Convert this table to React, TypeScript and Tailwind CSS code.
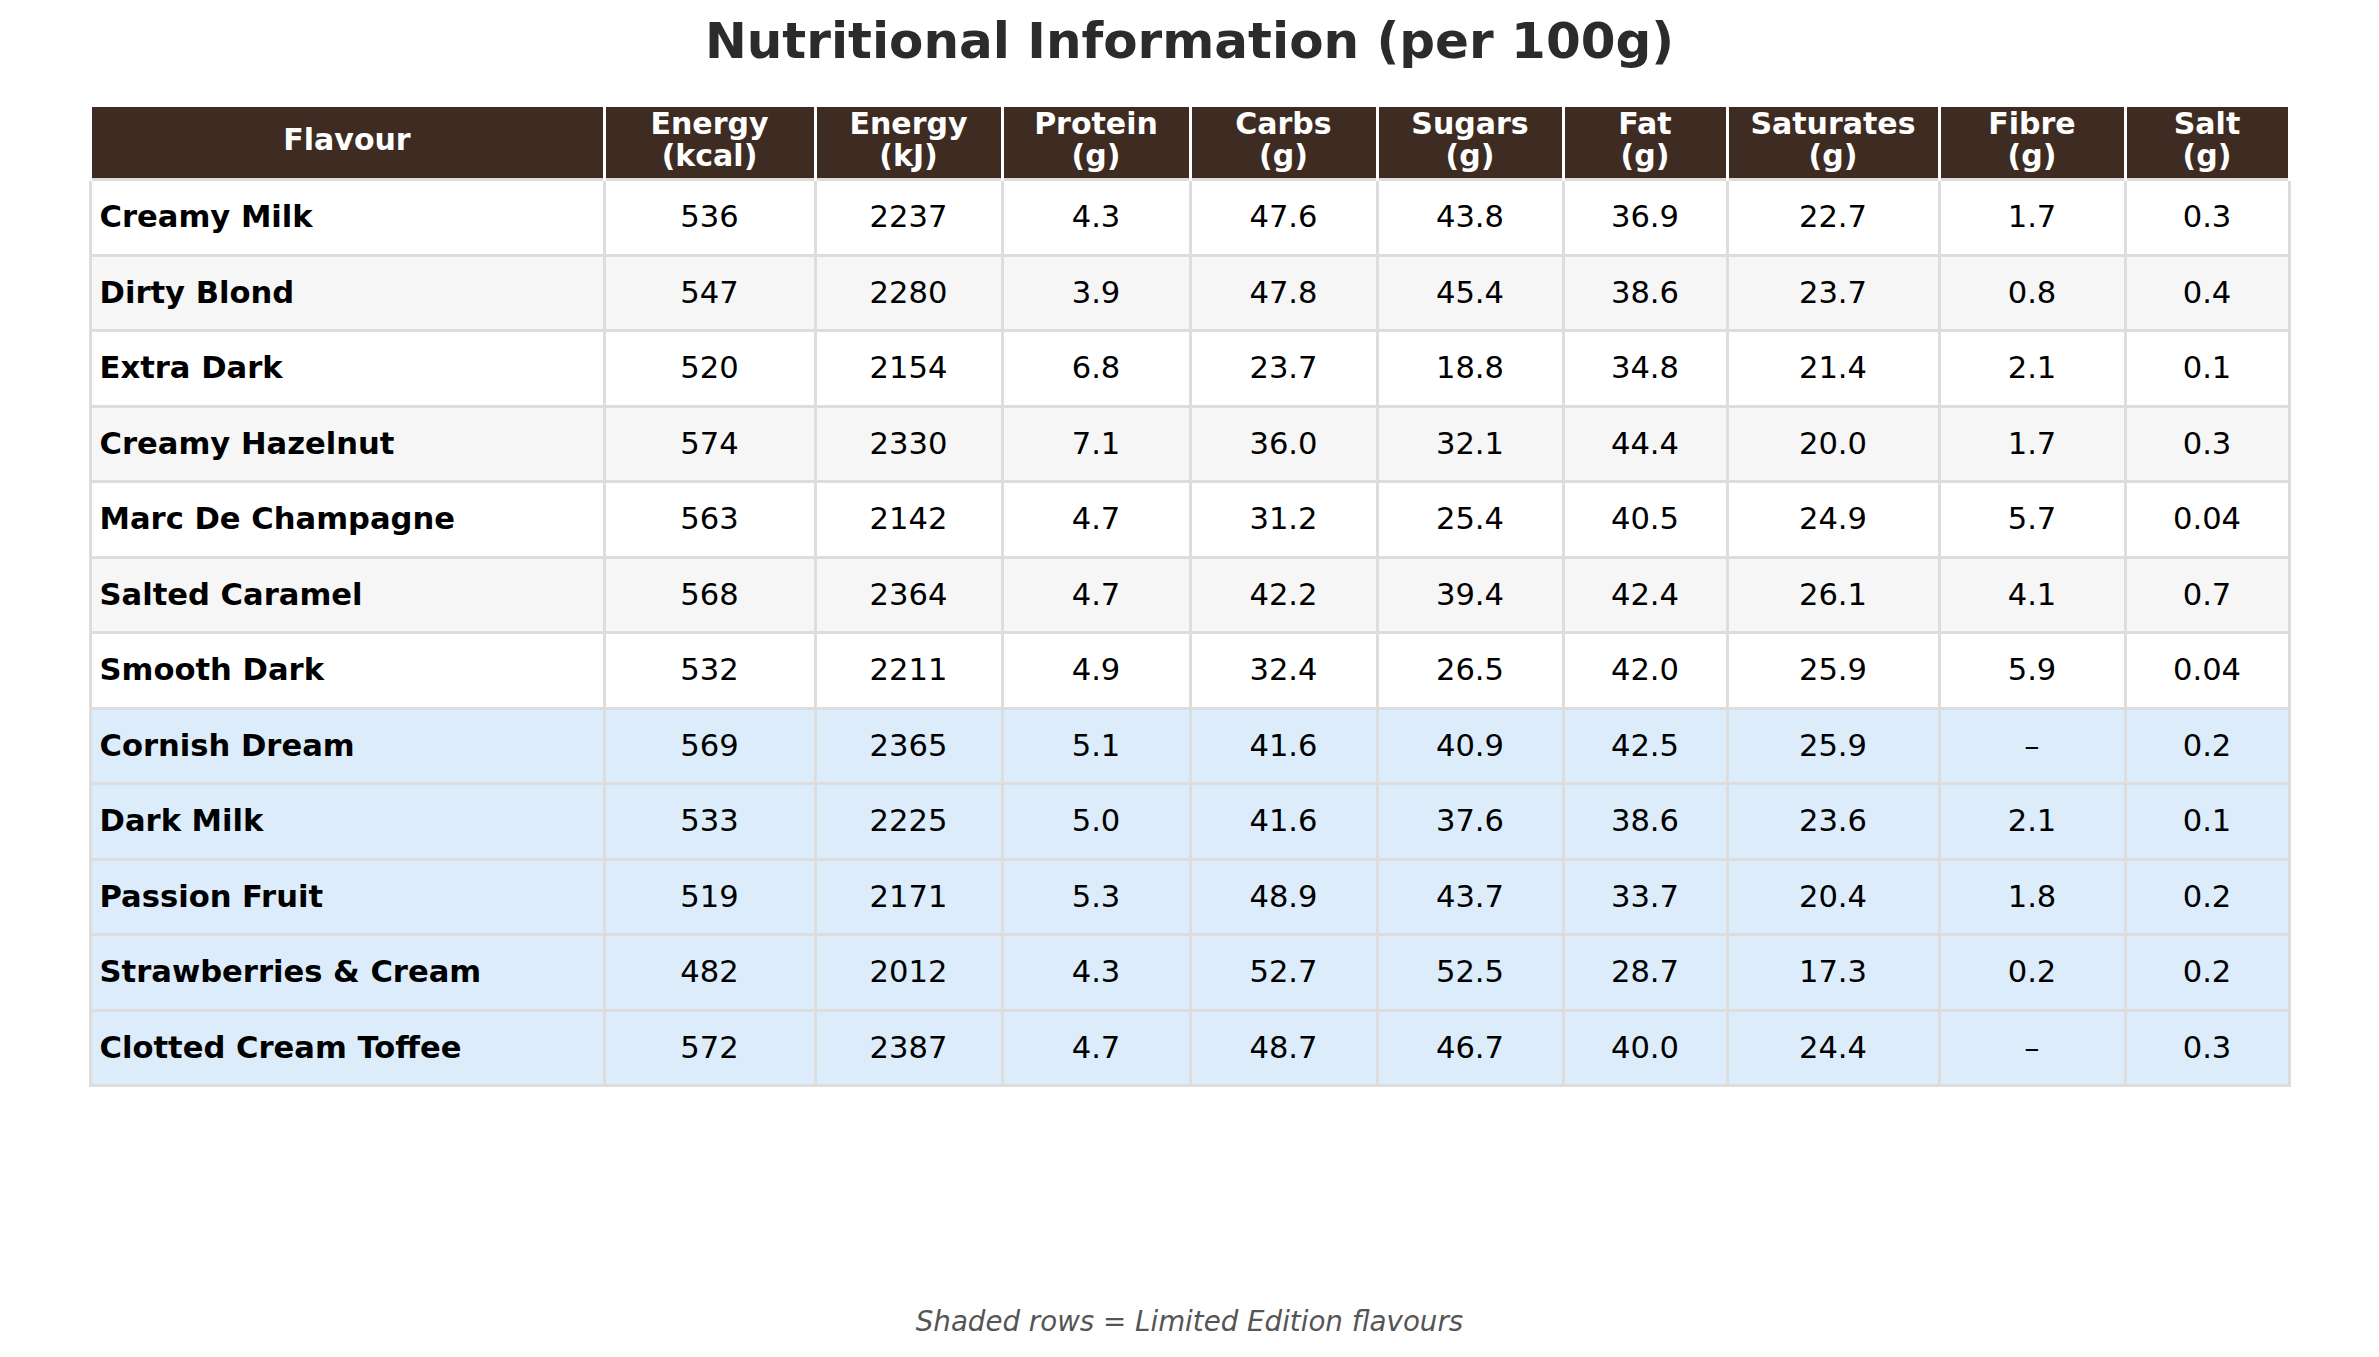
const columns: { label: string[]; width: string }[] = [
  { label: ["Flavour"], width: "w-[514px]" },
  { label: ["Energy", "(kcal)"], width: "w-[211px]" },
  { label: ["Energy", "(kJ)"], width: "w-[187px]" },
  { label: ["Protein", "(g)"], width: "w-[188px]" },
  { label: ["Carbs", "(g)"], width: "w-[187px]" },
  { label: ["Sugars", "(g)"], width: "w-[186px]" },
  { label: ["Fat", "(g)"], width: "w-[164px]" },
  { label: ["Saturates", "(g)"], width: "w-[212px]" },
  { label: ["Fibre", "(g)"], width: "w-[186px]" },
  { label: ["Salt", "(g)"], width: "w-[164px]" },
];

type Row = { name: string; values: string[]; limited?: boolean };

const rows: Row[] = [
  { name: "Creamy Milk", values: ["536", "2237", "4.3", "47.6", "43.8", "36.9", "22.7", "1.7", "0.3"] },
  { name: "Dirty Blond", values: ["547", "2280", "3.9", "47.8", "45.4", "38.6", "23.7", "0.8", "0.4"] },
  { name: "Extra Dark", values: ["520", "2154", "6.8", "23.7", "18.8", "34.8", "21.4", "2.1", "0.1"] },
  { name: "Creamy Hazelnut", values: ["574", "2330", "7.1", "36.0", "32.1", "44.4", "20.0", "1.7", "0.3"] },
  { name: "Marc De Champagne", values: ["563", "2142", "4.7", "31.2", "25.4", "40.5", "24.9", "5.7", "0.04"] },
  { name: "Salted Caramel", values: ["568", "2364", "4.7", "42.2", "39.4", "42.4", "26.1", "4.1", "0.7"] },
  { name: "Smooth Dark", values: ["532", "2211", "4.9", "32.4", "26.5", "42.0", "25.9", "5.9", "0.04"] },
  { name: "Cornish Dream", values: ["569", "2365", "5.1", "41.6", "40.9", "42.5", "25.9", "–", "0.2"], limited: true },
  { name: "Dark Milk", values: ["533", "2225", "5.0", "41.6", "37.6", "38.6", "23.6", "2.1", "0.1"], limited: true },
  { name: "Passion Fruit", values: ["519", "2171", "5.3", "48.9", "43.7", "33.7", "20.4", "1.8", "0.2"], limited: true },
  { name: "Strawberries & Cream", values: ["482", "2012", "4.3", "52.7", "52.5", "28.7", "17.3", "0.2", "0.2"], limited: true },
  { name: "Clotted Cream Toffee", values: ["572", "2387", "4.7", "48.7", "46.7", "40.0", "24.4", "–", "0.3"], limited: true },
];

function rowBg(row: Row, i: number) {
  if (row.limited) return "bg-[#dcecfa]";
  return i % 2 === 1 ? "bg-[#f6f6f6]" : "bg-white";
}

export default function App() {
  return (
    <div className="flex h-[1357px] w-full flex-col bg-white font-['DejaVu_Sans',_'Liberation_Sans',_sans-serif] text-black">
      <h1 className="pt-[16px] text-center text-[50px] font-bold leading-[50px] text-[#2b2b2b]">
        Nutritional Information (per 100g)
      </h1>

      <table className="mx-auto mt-[38px] w-[2200px] table-fixed border-collapse">
        <colgroup>
          {columns.map((c) => (
            <col key={c.label.join(" ")} className={c.width} />
          ))}
        </colgroup>
        <thead>
          <tr className="h-[74px]">
            {columns.map((c) => (
              <th
                key={c.label.join(" ")}
                className="border-x-[3px] border-t-[3px] border-white bg-[#3e2c23] p-0 pb-[5px] text-center align-middle text-[30px] font-bold leading-[32px] text-white">
                {c.label.map((l) => (
                  <div key={l}>{l}</div>
                ))}
              </th>
            ))}
          </tr>
        </thead>
        <tbody>
          {rows.map((row, i) => (
            <tr key={row.name} className={`h-[75.5px] ${rowBg(row, i)}`}>
              <td className="border-[3px] border-[#dddddd] px-[8px] text-left align-middle text-[30.6px] font-bold leading-[34px]">
                {row.name}
              </td>
              {row.values.map((v, j) => (
                <td
                  key={j}
                  className="border-[3px] border-[#dddddd] p-0 text-center align-middle text-[30.6px] leading-[34px]">
                  {v}
                </td>
              ))}
            </tr>
          ))}
        </tbody>
      </table>

      <p className="mt-auto pb-[21px] text-center text-[27.7px] italic leading-[28px] text-[#555555]">
        Shaded rows = Limited Edition flavours
      </p>
    </div>
  );
}
